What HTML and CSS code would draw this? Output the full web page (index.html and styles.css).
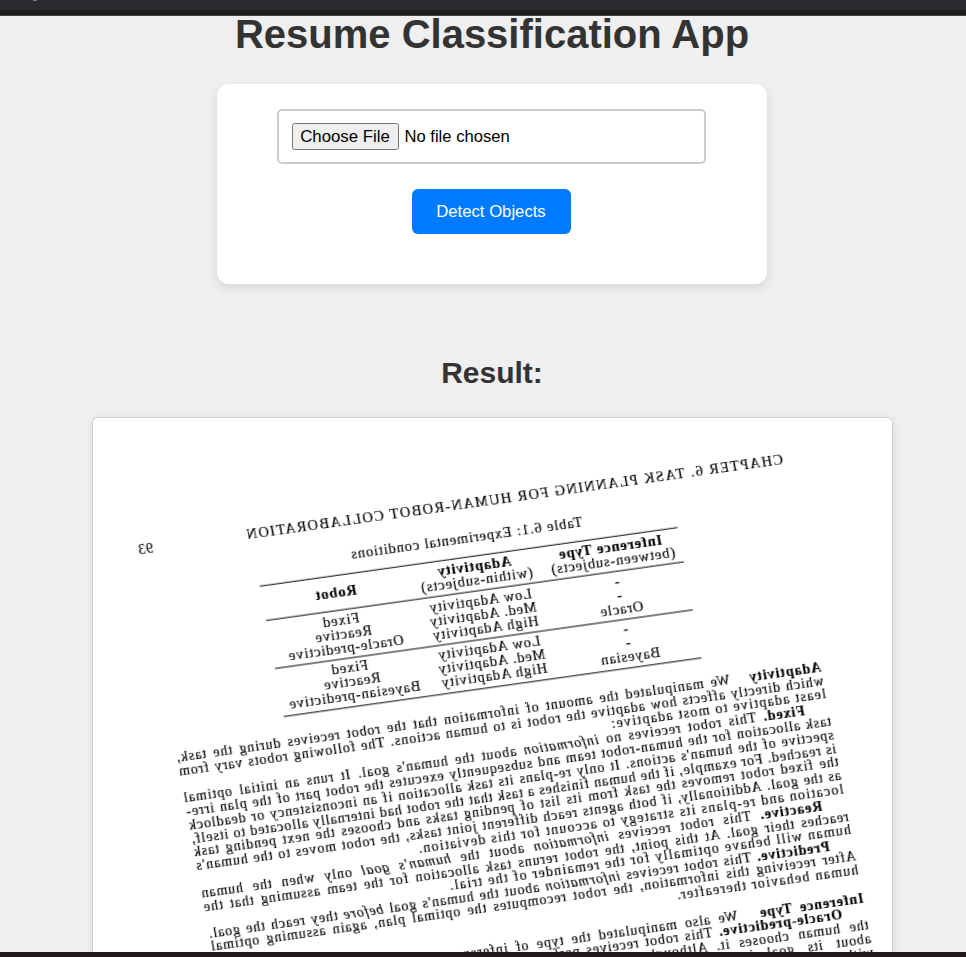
FILE: index.html
```html
<!DOCTYPE html>
<html lang="en">
<head>
  <meta charset="UTF-8">
  <meta name="viewport" content="width=device-width, initial-scale=1.0">
  <title>Resume Classification App</title>
  <link rel="stylesheet" href="styles.css">
</head>
<body>
  <div class="top-bar"></div>

  <div class="content">
    <div class="container">
      <h1>Resume Classification App</h1>

      <form class="upload-form">
        <input type="file" class="file-input" name="file">
        <button type="button" class="detect-button">Detect Objects</button>
      </form>

      <h2>Result:</h2>

      <div class="result-card">
        <!-- the detected page comes back mirrored and tilted -->
        <div class="scan">
          <div class="scan-header">
            <span class="scan-title">CHAPTER 6. TASK PLANNING FOR HUMAN-ROBOT COLLABORATION</span>
            <span>93</span>
          </div>

          <div class="scan-caption">Table 6.1: Experimental conditions</div>
          <table class="scan-table">
            <thead>
              <tr>
                <th><b>Inference Type</b><br>(between-subjects)</th>
                <th><b>Adaptivity</b><br>(within-subjects)</th>
                <th><b>Robot</b></th>
              </tr>
            </thead>
            <tbody>
              <tr>
                <td>-<br>-<br>Oracle</td>
                <td>Low Adaptivity<br>Med. Adaptivity<br>High Adaptivity</td>
                <td>Fixed<br>Reactive<br>Oracle-predictive</td>
              </tr>
              <tr>
                <td>-<br>-<br>Bayesian</td>
                <td>Low Adaptivity<br>Med. Adaptivity<br>High Adaptivity</td>
                <td>Fixed<br>Reactive<br>Bayesian-predictive</td>
              </tr>
            </tbody>
          </table>

          <div class="scan-body">
            <p class="line"><b>Adaptivity</b> &nbsp; We manipulated the amount of information that the robot receives during the task,</p>
            <p class="line">which directly affects how adaptive the robot is to human actions. The following robots vary from</p>
            <p class="line last">least adaptive to most adaptive:</p>
            <p class="line indent"><b>Fixed.</b> This robot receives no <i>information</i> about the human's goal. It runs an initial optimal</p>
            <p class="line">task allocation for the human-robot team and subsequently executes the robot part of the plan irre-</p>
            <p class="line">spective of the human's actions. It only re-plans its task allocation if an inconsistency or deadlock</p>
            <p class="line">is reached. For example, if the human finishes a task that the robot had internally allocated to itself,</p>
            <p class="line">the fixed robot removes the task from its list of pending tasks and chooses the next pending task</p>
            <p class="line">as the goal. Additionally, if both agents reach different joint tasks, the robot moves to the human's</p>
            <p class="line last">location and re-plans its strategy to account for this deviation.</p>
            <p class="line indent"><b>Reactive.</b> This robot receives <i>information</i> about the <i>human's goal</i> only when the human</p>
            <p class="line">reaches their goal. At this point, the robot reruns task allocation for the team assuming that the</p>
            <p class="line last">human will behave optimally for the remainder of the trial.</p>
            <p class="line indent"><b>Predictive.</b> This robot receives <i>information</i> about the human's goal <i>before</i> they reach the goal.</p>
            <p class="line">After receiving this information, the robot recomputes the optimal plan, again assuming optimal</p>
            <p class="line last">human behavior thereafter.</p>
            <p class="line section"><b>Inference Type</b> &nbsp; We also manipulated the type of inference the robot uses to learn the goal.</p>
            <p class="line indent"><b>Oracle-predictive.</b> This robot receives perfect information about the human's goal as soon as</p>
            <p class="line">the human chooses it. Although this is not realistic, it gives the robot complete knowledge</p>
            <p class="line">about its goal immediately, and gives us an upper bound on the team's performance</p>
            <p class="line">with inference that never makes a mistake about which goal is being pursued now.</p>
          </div>
        </div>
      </div>
    </div>
  </div>

  <div class="bottom-bar"></div>
</body>
</html>
```

FILE: styles.css
```css
html, body {
  height: 100%;
}

body {
  margin: 0;
  display: flex;
  flex-direction: column;
  height: 100vh;
  overflow: hidden;
  font-family: "Liberation Sans", Arial, sans-serif;
  background-color: #efefef;
  color: #333333;
}

/* browser chrome strip, the heading runs up under it */
.top-bar {
  position: fixed;
  top: 0;
  left: 0;
  right: 0;
  z-index: 10;
  height: 10px;
  background-color: #2a2b2f;
  border-bottom: 5px solid #1e1e1e;
  box-shadow: 0 1px 0 #454545;
}

.top-bar::before {
  content: "";
  display: block;
  width: 4px;
  height: 1px;
  margin-left: 33px;
  background: linear-gradient(90deg, #c07a3a, #3a78c0);
}

.bottom-bar {
  flex: none;
  height: 5px;
  background-color: #241a1c;
}

.content {
  flex: 1;
  overflow: hidden;
}

.container {
  width: 984px;
  padding-top: 11px;
  display: flex;
  flex-direction: column;
  align-items: center;
}

h1 {
  margin: 0 0 27px;
  font-size: 40px;
  line-height: 46px;
  color: #333333;
}

h2 {
  margin: 72px 0 27px;
  font-size: 30px;
  line-height: 34px;
  color: #333333;
}

.upload-form {
  box-sizing: border-box;
  width: 550px;
  height: 200px;
  padding-top: 25px;
  display: flex;
  flex-direction: column;
  align-items: center;
  gap: 25px;
  background-color: #ffffff;
  border-radius: 12px;
  box-shadow: 0 4px 10px rgba(0, 0, 0, 0.1);
}

.file-input {
  box-sizing: border-box;
  width: 429px;
  height: 55px;
  margin-right: 2px;
  padding: 12px 13px;
  border: 2px solid #cccccc;
  border-radius: 5px;
  font-family: "Liberation Sans", Arial, sans-serif;
  font-size: 16.6px;
  line-height: 24px;
  color: #000000;
}

.file-input::file-selector-button {
  height: 27px;
  width: 107px;
  padding: 1px 0;
  margin-right: 6px;
  font-family: "Liberation Sans", Arial, sans-serif;
  font-size: 16.8px;
}

.detect-button {
  width: 159px;
  height: 45px;
  margin-right: 2px;
  border: none;
  border-radius: 6px;
  background-color: #007bff;
  color: #ffffff;
  font-family: "Liberation Sans", Arial, sans-serif;
  font-size: 16.7px;
  cursor: pointer;
}

.result-card {
  box-sizing: border-box;
  width: 801px;
  height: 800px;
  flex: none;
  overflow: hidden;
  background-color: #ffffff;
  border: 1px solid #d0d0d0;
  border-radius: 6px;
  box-shadow: 0 2px 6px rgba(0, 0, 0, 0.12);
}

.scan {
  width: 652px;
  transform-origin: 0 0;
  transform: matrix(-0.99, 0.139, 0.18, 0.98, 688.7, 35.1);
  filter: blur(0.7px);
  font-family: "Liberation Serif", "Times New Roman", serif;
  font-size: 14px;
  line-height: 13.8px;
  letter-spacing: 0.95px;
  word-spacing: -2.5px;
  color: #000000;
  -webkit-text-stroke: 0.15px #000000;
}

.scan-header {
  display: flex;
  justify-content: space-between;
  height: 14px;
}

.scan-title {
  width: 543px;
  text-align-last: justify;
  font-size: 14.5px;
  letter-spacing: 1.4px;
}

.scan-caption {
  margin-top: 20px;
  text-align: center;
  font-size: 14.5px;
  letter-spacing: 0.9px;
  word-spacing: 0;
}

.scan-table {
  width: 422px;
  margin: 11px 0 19px 116px;
  border-collapse: collapse;
  border-top: 1.5px solid #000000;
  border-bottom: 1.5px solid #000000;
  table-layout: fixed;
  font-size: 14.5px;
  letter-spacing: 0.9px;
  word-spacing: 0;
}

.scan-table th,
.scan-table td {
  height: 48px;
  padding: 0;
  text-align: center;
  vertical-align: middle;
  font-weight: normal;
  border-bottom: 1px solid #000000;
}

.scan-table th {
  height: 34px;
}

.scan-table th:nth-child(1) {
  width: 140px;
}

.scan-table th:nth-child(2) {
  width: 135px;
}

.line {
  margin: 0;
  white-space: nowrap;
  text-align: justify;
  text-align-last: justify;
}

.line.last {
  text-align-last: left;
  letter-spacing: 1.3px;
  word-spacing: 0;
}

.line.indent {
  padding-left: 24px;
}

.line.section {
  margin-top: 15px;
}
```
